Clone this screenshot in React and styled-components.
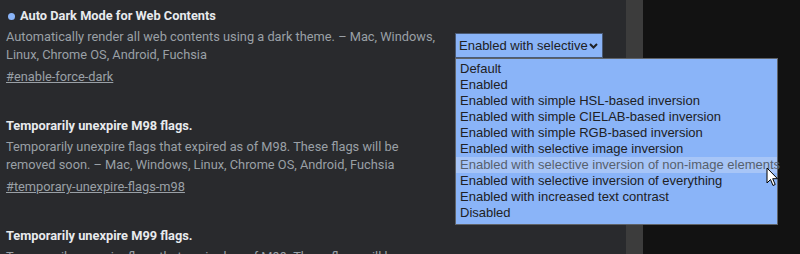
import styled, { createGlobalStyle } from 'styled-components';

const Global = createGlobalStyle`
  html, body {
    margin: 0;
    padding: 0;
    background: #121212;
    overflow: hidden;
  }
`;

const Page = styled.div`
  display: flex;
  width: 800px;
  height: 254px;
  overflow: hidden;
  position: relative;
`;

const Main = styled.div`
  width: 626px;
  flex-shrink: 0;
  background: #292a2d;
  padding: 6px 0 0 6px;
  box-sizing: border-box;
`;

const Scrollbar = styled.div`
  width: 17px;
  flex-shrink: 0;
  background: #3c3c3c;
`;

const Backdrop = styled.div`
  flex: 1;
  background: #121212;
`;

const Experiment = styled.div`
  display: flex;
  align-items: flex-start;
  height: 110px;
`;

const Info = styled.div`
  width: 440px;
  flex-shrink: 0;
  font-family: Roboto, 'Noto Sans', sans-serif;
  font-size: 12.8px;
`;

const Title = styled.h3`
  margin: 0;
  display: flex;
  align-items: center;
  gap: 5px;
  font-size: 12.8px;
  line-height: 20px;
  font-weight: 700;
  color: #e8eaed;
`;

const Dot = styled.span`
  width: 7px;
  height: 7px;
  margin-left: 2px;
  border-radius: 50%;
  background: #8ab4f8;
`;

const Description = styled.p`
  margin: 2px 0 0;
  line-height: 18px;
  color: #9aa0a6;
`;

const Permalink = styled.a`
  display: inline-block;
  margin-top: 4px;
  line-height: 18px;
  color: #9aa0a6;
  text-decoration: underline;
`;

const Control = styled.div`
  position: relative;
  margin: 27px 0 0 9px;
  font-family: 'Liberation Sans', Arial, sans-serif;
  font-size: 13px;
`;

const Select = styled.div`
  width: 148px;
  height: 25px;
  box-sizing: border-box;
  display: flex;
  align-items: center;
  gap: 1px;
  padding: 0 4px 0 3px;
  background: #8ab4f8;
  border: 1px solid #4a5a75;
  color: #202124;
`;

const SelectLabel = styled.span`
  flex: 1;
  overflow: hidden;
  white-space: nowrap;
`;

const Options = styled.ul`
  position: absolute;
  left: 0;
  top: 25px;
  width: 323px;
  box-sizing: border-box;
  margin: 0;
  padding: 2px 0 3px;
  list-style: none;
  background: #8ab4f8;
  border: 1px solid #5f6368;
  z-index: 2;
`;

const Option = styled.li`
  height: 16px;
  line-height: 16px;
  padding-left: 4px;
  white-space: nowrap;
  color: ${({ $hover }) => ($hover ? '#56606e' : '#202124')};
  background: ${({ $hover }) => ($hover ? '#a7c5f7' : 'transparent')};
`;

const Pointer = styled.svg`
  position: absolute;
  left: 766px;
  top: 167px;
  z-index: 3;
`;

const options = [
  'Default',
  'Enabled',
  'Enabled with simple HSL-based inversion',
  'Enabled with simple CIELAB-based inversion',
  'Enabled with simple RGB-based inversion',
  'Enabled with selective image inversion',
  'Enabled with selective inversion of non-image elements',
  'Enabled with selective inversion of everything',
  'Enabled with increased text contrast',
  'Disabled',
];

const Chevron = () => (
  <svg width="9" height="6" viewBox="0 0 9 6">
    <path d="M1 1l3.5 3.5L8 1" fill="none" stroke="#202124" strokeWidth="2" />
  </svg>
);

export default function App() {
  return (
    <Page>
      <Global />
      <Main>
        <Experiment>
          <Info>
            <Title>
              <Dot />
              Auto Dark Mode for Web Contents
            </Title>
            <Description>
              Automatically render all web contents using a dark theme. – Mac, Windows, Linux,
              Chrome OS, Android, Fuchsia
            </Description>
            <Permalink>#enable-force-dark</Permalink>
          </Info>
          <Control>
            <Select>
              <SelectLabel>Enabled with selective inversion of non-image elements</SelectLabel>
              <Chevron />
            </Select>
            <Options>
              {options.map((o, i) => (
                <Option key={o} $hover={i === 6}>
                  {o}
                </Option>
              ))}
            </Options>
          </Control>
        </Experiment>
        <Experiment>
          <Info>
            <Title>Temporarily unexpire M98 flags.</Title>
            <Description>
              Temporarily unexpire flags that expired as of M98. These flags will be removed
              soon. – Mac, Windows, Linux, Chrome OS, Android, Fuchsia
            </Description>
            <Permalink>#temporary-unexpire-flags-m98</Permalink>
          </Info>
        </Experiment>
        <Experiment>
          <Info>
            <Title>Temporarily unexpire M99 flags.</Title>
            <Description>
              Temporarily unexpire flags that expired as of M99. These flags will be removed
              soon. – Mac, Windows, Linux, Chrome OS, Android, Fuchsia
            </Description>
          </Info>
        </Experiment>
      </Main>
      <Scrollbar />
      <Backdrop />
      <Pointer width="12" height="20" viewBox="0 0 12 20">
        <path d="M1 1v15l3.5-3.5 2.5 6 2.2-1-2.5-5.8H11.5z" fill="#fff" stroke="#000" strokeWidth="1" strokeLinejoin="round" />
      </Pointer>
    </Page>
  );
}
